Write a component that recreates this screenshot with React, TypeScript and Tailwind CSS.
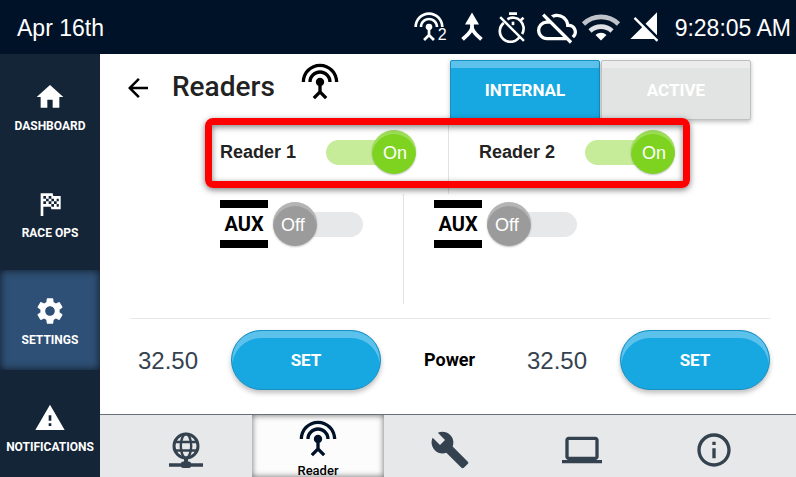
import React, { useState } from 'react';
import {
  MdArrowBack, MdBuild, MdHome, MdInfoOutline, MdOutlineCloudOff, MdOutlineLaptop,
  MdSettings, MdWarning,
} from 'react-icons/md';

const arial = 'font-["Liberation_Sans",Arial,sans-serif]';

const AntennaIcon = ({ className }: { className: string }) => (
  <svg viewBox="0 0 24 24" fill="currentColor" className={className}>
    <path d="M12 5c-3.87 0-7 3.13-7 7h2c0-2.76 2.24-5 5-5s5 2.24 5 5h2c0-3.87-3.13-7-7-7zm1 9.29c.88-.39 1.5-1.26 1.5-2.29a2.5 2.5 0 0 0-5 0c0 1.02.62 1.9 1.5 2.29v3.3L7.59 21 9 22.41l3-3 3 3L16.41 21 13 17.59v-3.3zM12 1C5.93 1 1 5.93 1 12h2c0-4.97 4.03-9 9-9s9 4.03 9 9h2c0-6.07-4.93-11-11-11z" />
  </svg>
);

const MergeIcon = () => (
  <svg viewBox="0 0 22 30" className="h-[30px] w-[22px]">
    <path d="M11 0.5 18 12.5H4z" fill="currentColor" />
    <path d="M11 11v4c0 5-5 8-9.4 12.3M11 15c0 5 5 8 9.4 12.3" fill="none" stroke="currentColor" strokeWidth="3.8" />
  </svg>
);

const TimerOffIcon = () => (
  <svg viewBox="0 0 24 24" fill="none" stroke="currentColor" strokeWidth="2" className="size-8">
    <path d="M5.1 8.9A8 8 0 1 0 17 19.2M7.8 6.2A8 8 0 0 1 18.8 17.2" />
    <path d="M9 2h6M17.6 7.2l2.3-2.1" />
    <path d="M12 8v2.6" />
    <path d="M2.4 4.6 20.2 22.4" strokeWidth="1.8" />
  </svg>
);

const WifiIcon = () => (
  <svg viewBox="0 0 40 30" fill="none" className="h-[30px] w-10">
    <path d="M2.5 12a25 25 0 0 1 35 0" stroke="#bfc3c9" strokeWidth="4.6" />
    <path d="M9 19a16 16 0 0 1 22 0" stroke="#dfe1e4" strokeWidth="4.6" />
    <path d="M20 28.5l-5.5-5.6a8 8 0 0 1 11 0z" fill="#fff" />
  </svg>
);

const SignalOffIcon = () => (
  <svg viewBox="0 0 24 24" fill="currentColor" className="size-8">
    <path d="M21 1l-8.59 8.59L21 18.18V1zM4.77 4.5L3.5 5.77l6.36 6.36L1 21h17.73l2 2L22 21.73 4.77 4.5z" />
  </svg>
);

const RaceFlagIcon = () => (
  <svg viewBox="0 0 24 24" className="size-8">
    <path d="M14.4 6L14 4H5v17h2v-7h5.6l.4 2h7V6z" fill="currentColor" />
    <path
      fill="#152538"
      d="M7 6h2v2H7zM11 6h2v2h-2zM9 8h2v2H9zM13 8h2v2h-2zM7 10h2v2H7zM11 10h2v2h-2zM15 10h2v2h-2zM17 8h1.6v2H17zM13 12h2v2h-2zM17 12h1.6v2H17z"
    />
  </svg>
);

const NetworkIcon = () => (
  <svg viewBox="0 0 40 40" fill="none" stroke="currentColor" className="size-10">
    <circle cx="20" cy="16" r="12" strokeWidth="3" />
    <ellipse cx="20" cy="16" rx="5.2" ry="12" strokeWidth="2.4" />
    <path d="M9 12h22M9 20.5h22" strokeWidth="2.4" />
    <path d="M20 28v4" strokeWidth="4" />
    <path d="M3 35h34" strokeWidth="3.6" />
    <rect x="15" y="31.5" width="10" height="6.5" rx="2" fill="currentColor" stroke="none" />
  </svg>
);

const Toggle = ({ id, label, initial }: { id: string; label: string; initial: boolean }) => {
  const [on, setOn] = useState(initial);
  return (
    <label htmlFor={id} className="relative grid w-[90px] cursor-pointer items-center">
      <input
        id={id}
        type="checkbox"
        aria-label={label}
        checked={on}
        onChange={e => setOn(e.target.checked)}
        className="sr-only"
      />
      <span className={`col-start-1 row-start-1 h-[25px] rounded-full ${on ? 'bg-[#c6ec9a]' : 'bg-[#e7e8ea]'}`} />
      <span
        className={`col-start-1 row-start-1 flex size-11 items-center rounded-full pt-0.5 text-lg text-white ${arial} ${
          on
            ? 'justify-center justify-self-end bg-[#7ed321] pl-0.5 shadow-[inset_0_4px_0_rgba(255,255,255,0.25),0_1px_2px_rgba(0,0,0,0.25)]'
            : 'justify-self-start bg-[#9b9b9b] pl-2 shadow-[inset_0_4px_0_rgba(255,255,255,0.25),0_1px_2px_rgba(0,0,0,0.25)]'
        }`}
      >
        {on ? 'On' : 'Off'}
      </span>
    </label>
  );
};

const AuxSwitch = ({ id, label }: { id: string; label: string }) => (
  <div className="flex h-12 items-center gap-[5px]">
    <span className="flex h-12 w-12 items-center justify-center border-y-8 border-black text-xl font-bold text-black">AUX</span>
    <Toggle id={id} label={label} initial={false} />
  </div>
);

const SetButton = () => (
  <button className="h-[60px] w-[150px] shrink-0 rounded-full border border-[#1790c4] bg-[#17a8e2] pt-0.5 text-[17px] font-bold text-white shadow-[inset_0_7px_0_rgba(255,255,255,0.3),0_3px_5px_rgba(0,0,0,0.25)]">
    SET
  </button>
);

const navItems = [
  { name: 'DASHBOARD', icon: <MdHome className="size-8" /> },
  { name: 'RACE OPS', icon: <RaceFlagIcon /> },
  { name: 'SETTINGS', icon: <MdSettings className="size-8" />, active: true },
  { name: 'NOTIFICATIONS', icon: <MdWarning className="size-8" /> },
];

const tabs = [
  { name: 'Network', icon: <NetworkIcon /> },
  { name: 'Reader', icon: <AntennaIcon className="size-10 shrink-0" />, active: true },
  { name: 'Tools', icon: <MdBuild className="size-10" /> },
  { name: 'Display', icon: <MdOutlineLaptop className="size-10" /> },
  { name: 'Info', icon: <MdInfoOutline className="size-10" /> },
];

export default function App() {
  return (
    <div className="flex min-h-screen flex-col bg-white font-[Roboto,sans-serif]">
      <header className={`flex h-[54px] items-center bg-[#001228] pr-[5px] pl-[17px] text-[23px] text-white ${arial}`}>
        <span className="pt-0.5">Apr 16th</span>
        <div className="ml-auto flex items-center">
          <div className="relative">
            <AntennaIcon className="size-8" />
            <span className="absolute -right-0.5 bottom-0 text-base leading-none">2</span>
          </div>
          <div className="ml-4"><MergeIcon /></div>
          <div className="ml-[14px]"><TimerOffIcon /></div>
          <MdOutlineCloudOff className="ml-2 size-10" />
          <div className="ml-1"><WifiIcon /></div>
          <div className="ml-2"><SignalOffIcon /></div>
          <span className="ml-[14px] pt-0.5">9:28:05 AM</span>
        </div>
      </header>

      <div className="flex flex-1">
        <nav className="flex w-[100px] shrink-0 flex-col gap-[7px] bg-[#152538] pt-0.5">
          {navItems.map(item => (
            <a
              key={item.name}
              href="#"
              className={`flex h-[100px] flex-col items-center pt-[25px] text-xs font-bold text-white ${
                item.active ? 'bg-[#2f5076] shadow-[inset_0_0_8px_rgba(0,0,0,0.7)]' : ''
              }`}
            >
              {item.icon}
              <span className="leading-[26px]">{item.name}</span>
            </a>
          ))}
        </nav>

        <div className="flex min-w-0 flex-1 flex-col">
          <main className="flex-1">
            <div className="flex items-start pt-1.5 pr-[45px] pl-[23px]">
              <div className="flex items-center pt-1">
                <button aria-label="Back" className="mt-1 text-black">
                  <MdArrowBack className="size-[30px]" />
                </button>
                <h1 className="mt-0.5 ml-[19px] text-[28px] font-medium text-[#222]">Readers</h1>
                <AntennaIcon className="-mt-2 ml-[25px] size-10 text-black" />
              </div>
              <div className="ml-auto flex gap-px">
                <button className="h-[60px] w-[150px] rounded-xs border border-[#1790c4] bg-[#17a8e2] pt-0.5 text-[17px] font-bold text-white shadow-[inset_0_7px_0_rgba(255,255,255,0.3),0_2px_4px_rgba(0,0,0,0.25)]">
                  INTERNAL
                </button>
                <button className="h-[60px] w-[150px] rounded-xs border border-[#bfc0c0] bg-[#e2e4e3] pt-0.5 text-[17px] font-bold text-white shadow-[inset_0_7px_0_rgba(255,255,255,0.3),0_2px_4px_rgba(0,0,0,0.25)]">
                  ACTIVE
                </button>
              </div>
            </div>

            <div className="flex pl-[120px]">
              <div className="relative flex">
                <div className="flex h-[74px] items-start pt-2.5 pr-8">
                  <label htmlFor="reader-1" className={`w-[106px] text-lg leading-[44px] font-bold text-[#222] ${arial}`}>Reader 1</label>
                  <Toggle id="reader-1" label="Reader 1" initial />
                </div>
                <div className="flex h-[74px] items-start border-l border-[#e1e2e4] pt-2.5 pl-[30px]">
                  <label htmlFor="reader-2" className={`w-[106px] text-lg leading-[44px] font-bold text-[#222] ${arial}`}>Reader 2</label>
                  <Toggle id="reader-2" label="Reader 2" initial />
                </div>
                {/* highlight frame */}
                <div className="pointer-events-none absolute -inset-x-[15px] -top-0.5 bottom-1.5 rounded-lg border-[7px] border-[#f00] shadow-[0_2px_6px_rgba(0,0,0,0.5),inset_0_2px_6px_rgba(0,0,0,0.5)]" />
              </div>
            </div>

            <div className="flex h-[110px] pl-[120px]">
              <div className="border-r border-[#e1e2e4] pt-1.5 pr-10">
                <AuxSwitch id="aux-1" label="Aux 1" />
              </div>
              <div className="pt-1.5 pl-[30px]">
                <AuxSwitch id="aux-2" label="Aux 2" />
              </div>
            </div>

            <hr className="mt-[14px] mr-[26px] ml-[30px] border-[#e7e8ea]" />

            <div className="flex items-center pt-[11px] pr-[26px] pb-6 pl-[38px]">
              <span className={`w-[93px] pt-0.5 text-2xl text-[#35424f] ${arial}`}>32.50</span>
              <SetButton />
              <span className="flex-1 pl-[43px] text-lg font-bold text-black">Power</span>
              <span className={`w-[93px] pt-0.5 text-2xl text-[#35424f] ${arial}`}>32.50</span>
              <SetButton />
            </div>
          </main>

          <nav className="flex h-[63px] overflow-hidden border-t border-[#66707a] bg-[#e7e8ea] pr-4 pl-5 text-[#34424f]">
            {tabs.map(tab => (
              <a
                key={tab.name}
                href="#"
                aria-label={tab.name}
                className={`flex flex-1 flex-col items-center ${
                  tab.active
                    ? 'bg-[#fcfcfc] pt-1 text-[#001228] shadow-[inset_0_0_6px_rgba(0,0,0,0.6)]'
                    : 'pt-[15px]'
                }`}
              >
                {tab.icon}
                {tab.active && <span className="text-[13px] leading-6 font-medium text-black">{tab.name}</span>}
              </a>
            ))}
          </nav>
        </div>
      </div>
    </div>
  );
}
